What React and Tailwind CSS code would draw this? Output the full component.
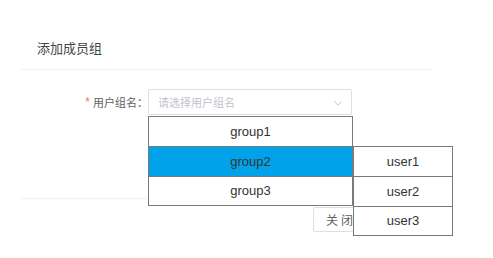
import React from "react";

const cjk = { fontFamily: '"Noto Sans CJK SC", "Liberation Sans", sans-serif' };
const latin = { fontFamily: '"Liberation Sans", Arial, sans-serif' };

export default function App() {
  const groups = ["group1", "group2", "group3"];
  const users = ["user1", "user2", "user3"];
  return (
    <div className="w-[493px] h-[258px] bg-white overflow-hidden" style={cjk}>
      <div className="ml-[20px] w-[412px]">
        <div className="pt-[38px] pb-[11px] pl-[17px] border-b border-[#f2f2f2] text-[13px] leading-[20px] text-[#444444]">
          添加成员组
        </div>
        <div className="pt-[19px] h-[129px] border-b border-[#f2f2f2]">
          <div className="flex items-start">
            <div className="w-[128px] h-[26px] flex items-center justify-end text-[11px] text-[#606266] whitespace-nowrap">
              <span className="text-[#f56c6c] mr-[3px] text-[12px]" style={latin}>*</span>
              <span>用户组名：</span>
            </div>
            <div className="relative w-[204px]">
              <div className="h-[26px] border border-[#dcdfe6] rounded-[2px] flex items-center justify-between pl-[9px] pr-[9px]">
                <span className="text-[11px] text-[#c0c4cc]">请选择用户组名</span>
                <svg width="8" height="5" viewBox="0 0 8 5" className="mt-[2px]">
                  <polyline points="0.5,0.5 4,4.2 7.5,0.5" fill="none" stroke="#c0c4cc" strokeWidth="1" />
                </svg>
              </div>
              <div className="absolute top-[27px] left-0 w-[205px] z-10" style={latin}>
                {groups.map((g, i) => (
                  <div
                    key={g}
                    className={`${i === 0 ? "" : "-mt-px"} ${i === 2 ? "h-[30px]" : "h-[31px]"} border border-[#7a7a7a] flex items-center justify-center text-[13px] text-[#333333] ${i === 1 ? "bg-[#00a3ea]" : "bg-white"}`}
                  >
                    {g}
                  </div>
                ))}
              </div>
              <div className="absolute top-[57px] left-[205px] w-[100px] z-20" style={latin}>
                {users.map((u, i) => (
                  <div
                    key={u}
                    className={`${i === 0 ? "" : "-mt-px"} ${i === 2 ? "h-[30px]" : "h-[31px]"} border border-[#7a7a7a] bg-white flex items-center justify-center text-[13px] text-[#333333]`}
                  >
                    {u}
                  </div>
                ))}
              </div>
            </div>
          </div>
        </div>
        <div className="pt-[8px] pl-[293px] flex">
          <button className="h-[25px] w-[60px] border border-[#dcdfe6] rounded-[2px] bg-white text-[12px] text-[#606266] flex items-center pl-[12px] tracking-[3px]">
            关闭
          </button>
        </div>
      </div>
    </div>
  );
}
